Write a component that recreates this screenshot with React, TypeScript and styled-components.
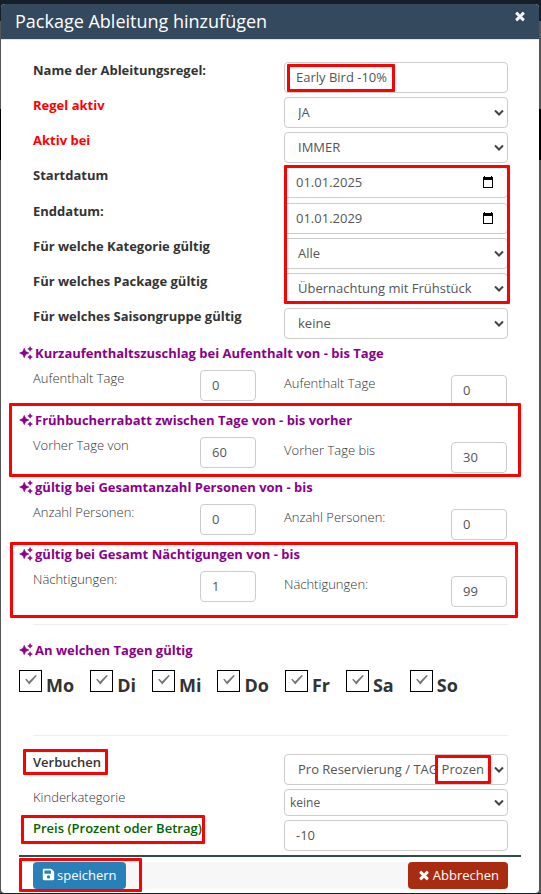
import React, { useId, useState } from "react";
import styled, { createGlobalStyle, css } from "styled-components";
import { FaSave } from "react-icons/fa";

const GlobalStyle = createGlobalStyle`
  *, *::before, *::after { box-sizing: border-box; }
  body {
    margin: 0;
    background: linear-gradient(#161e27 0 21px, #555 21px 109px, #000 109px 160px, #555 160px);
    font: 13px/18px "Open Sans", sans-serif;
    color: #333;
  }
  input, select, button { font-family: inherit; }
`;

const Modal = styled.main`
  margin: 4px 2px 0 1px;
  background: #fff;
  border-radius: 4px;
  overflow: hidden;
`;

const Header = styled.header`
  display: flex;
  align-items: flex-start;
  justify-content: space-between;
  padding: 0 12px 0 14px;
  background: #34495e;
  border-bottom: 1px solid #e5e5e5;
  color: #fff;
`;

const Title = styled.h1`
  margin: 0;
  font-size: 18px;
  font-weight: 400;
  line-height: 35px;
`;

const CloseButton = styled.button`
  display: flex;
  margin: 5px 0 0;
  padding: 0;
  border: 0;
  background: none;
  color: #f0f2f4;
  cursor: pointer;
`;

const Form = styled.form`
  padding: 22px 31px 4px 32px;
`;

const Row = styled.div<{ $height?: number }>`
  display: grid;
  grid-template-columns: minmax(0, 251fr) minmax(0, 224fr);
  align-items: start;
  min-height: ${(p) => p.$height ?? 35}px;
`;

const Label = styled.label<{ $tone?: string; $weight?: number }>`
  justify-self: start;
  position: relative;
  color: ${(p) => p.$tone ?? "#333"};
  font-weight: ${(p) => p.$weight ?? 700};
  line-height: 16px;
`;

const ControlWrap = styled.div`
  position: relative;
  display: flex;
`;

const control = css`
  width: 100%;
  min-width: 0;
  margin: 0;
  border: 1px solid #ccc;
  border-radius: 4px;
  background: #fff;
  color: #555;
  font-size: 13px;
  line-height: 18px;
`;

const Input = styled.input`
  ${control}
  height: 31px;
  padding: 0 11px 2px;
`;

const Select = styled.select<{ $compact?: boolean }>`
  ${control}
  appearance: none;
  height: ${(p) => (p.$compact ? 27 : 31)}px;
  padding: ${(p) => (p.$compact ? "0 23px 0 5px" : "0 23px 2px 13px")};
  font-size: ${(p) => (p.$compact ? 12 : 13)}px;
`;

const ChevronSvg = styled.svg`
  position: absolute;
  right: 4px;
  top: 50%;
  margin-top: -4px;
  pointer-events: none;
`;

const PickerButton = styled.button`
  position: absolute;
  right: 14px;
  top: 9px;
  display: flex;
  padding: 0;
  border: 0;
  background: none;
  color: #000;
`;

const Marker = styled.span<{ $inset: string }>`
  position: absolute;
  inset: ${(p) => p.$inset};
  border: 3px solid #f00;
  border-radius: 1px;
  pointer-events: none;
  z-index: 1;
`;

const Group = styled.div`
  position: relative;
`;

const RangeSection = styled.section`
  position: relative;
  min-height: 67px;
`;

const SectionTitle = styled.h2`
  display: flex;
  align-items: center;
  gap: 2px;
  margin: 0 0 0 -14px;
  color: #8b008b;
  font-size: 13px;
  font-weight: 700;
  line-height: 18px;
`;

const RangeRow = styled.div`
  display: grid;
  grid-template-columns: 1fr 1fr;
  column-gap: 28px;
  padding: 8px 1px 0 0;
`;

const RangeField = styled.div<{ $lower?: boolean }>`
  display: grid;
  grid-template-columns: 167fr 56fr;
  align-items: start;
  padding-top: ${(p) => (p.$lower ? 5 : 0)}px;
`;

const Divider = styled.hr<{ $space: string }>`
  margin: ${(p) => p.$space};
  border: 0;
  border-top: 1px solid #eee;
`;

const Days = styled.div`
  display: flex;
  flex-wrap: wrap;
  gap: 16px;
  margin: 11px 0 0 -14px;
`;

const Day = styled.label`
  position: relative;
  display: flex;
  gap: 4px;
  font-size: 18px;
  font-weight: 700;
  line-height: 30px;
`;

const DayBox = styled.input`
  appearance: none;
  width: 23px;
  height: 22px;
  margin: 0;
  border: 1px solid #000;
  background: #fff;
  &:checked + svg { visibility: visible; }
`;

const TickSvg = styled.svg`
  position: absolute;
  left: 5px;
  top: 3px;
  visibility: hidden;
  pointer-events: none;
`;

const Footer = styled.footer`
  margin: 0 18px;
  padding: 5px 13px 4px 14px;
  border-top: 2px solid #2f4f4f;
`;

const Actions = styled.div`
  position: relative;
  display: flex;
  justify-content: space-between;
  background: #f7f7f7;
`;

const ActionButton = styled.button<{ $color: string }>`
  display: flex;
  align-items: center;
  gap: 2px;
  height: 27px;
  padding: 0 9px 2px;
  border: 0;
  border-radius: 4px;
  background: ${(p) => p.$color};
  color: #fff;
  font-size: 13px;
  line-height: 18px;
  cursor: pointer;
`;

const CrossIcon = ({ size }: { size: number }) => (
  <svg width={size} height={size} viewBox="0 0 1792 1792" fill="currentColor" aria-hidden="true">
    <path d="M1490 1322q0 40-28 68l-136 136q-28 28-68 28t-68-28l-294-294-294 294q-28 28-68 28t-68-28l-136-136q-28-28-28-68t28-68l294-294-294-294q-28-28-28-68t28-68l136-136q28-28 68-28t68 28l294 294 294-294q28-28 68-28t68 28l136 136q28 28 28 68t-28 68l-294 294 294 294q28 28 28 68z" />
  </svg>
);

const SparkleIcon = () => (
  <svg width="14" height="14" viewBox="0 0 24 24" fill="currentColor" stroke="currentColor" strokeWidth="1" aria-hidden="true">
    <path d="M19 9l1.25-2.75L23 5l-2.75-1.25L19 1l-1.25 2.75L15 5l2.75 1.25L19 9zm-7.5.5L9 4 6.5 9.5 1 12l5.5 2.5L9 20l2.5-5.5L17 12l-5.5-2.5zM19 15l-1.25 2.75L15 19l2.75 1.25L19 23l1.25-2.75L23 19l-2.75-1.25L19 15z" />
  </svg>
);

const Tick = () => (
  <TickSvg width="14" height="14" viewBox="0 0 14 14" aria-hidden="true">
    <path d="M1.2 6.6 2.3 5.7 5 8.4 11.6 2 12.9 2.8 5.2 11.4z" fill="#777" />
  </TickSvg>
);

const Chevron = () => (
  <ChevronSvg width="10" height="8" viewBox="0 0 10 8" aria-hidden="true">
    <path d="M1 1.5 5 5.5 9 1.5" fill="none" stroke="#444" strokeWidth="2" />
  </ChevronSvg>
);

const CalendarIcon = () => (
  <svg width="12" height="12" viewBox="0 0 12 12" aria-hidden="true">
    <path d="M2 0h1v1h6V0h1v1h1v11H1V1h1zM2 4v7h8V4z" fill="currentColor" fillRule="evenodd" />
  </svg>
);

interface RowProps {
  label: string;
  tone?: string;
  weight?: number;
  height?: number;
  labelMarker?: string;
  controlMarker?: string;
}

interface FieldProps extends RowProps {
  value: string;
  compact?: boolean;
}

const FormRow = (p: RowProps & { id: string; children: React.ReactNode }) => (
  <Row $height={p.height}>
    <Label htmlFor={p.id} $tone={p.tone} $weight={p.weight}>
      {p.label}
      {p.labelMarker && <Marker $inset={p.labelMarker} />}
    </Label>
    <ControlWrap>
      {p.children}
      {p.controlMarker && <Marker $inset={p.controlMarker} />}
    </ControlWrap>
  </Row>
);

const TextField = ({ value, ...row }: FieldProps) => {
  const id = useId();
  return (
    <FormRow {...row} id={id}>
      <Input id={id} type="text" defaultValue={value} />
    </FormRow>
  );
};

const DateField = ({ value, ...row }: FieldProps) => {
  const id = useId();
  return (
    <FormRow {...row} id={id}>
      <Input id={id} type="text" inputMode="numeric" defaultValue={value} />
      <PickerButton type="button" aria-label={`${row.label} Kalender`}>
        <CalendarIcon />
      </PickerButton>
    </FormRow>
  );
};

const SelectField = ({ value, compact, ...row }: FieldProps) => {
  const id = useId();
  return (
    <FormRow {...row} id={id}>
      <Select id={id} defaultValue={value} $compact={compact}>
        <option>{value}</option>
      </Select>
      <Chevron />
    </FormRow>
  );
};

interface RangeProps {
  title: string;
  labels: [string, string];
  values: [string, string];
  marker?: string;
}

const Range = ({ title, labels, values, marker }: RangeProps) => {
  const id = useId();
  return (
    <RangeSection>
      <SectionTitle>
        <SparkleIcon />
        {title}
      </SectionTitle>
      <RangeRow>
        {labels.map((label, i) => (
          <RangeField key={i} $lower={i === 1}>
            <Label htmlFor={id + i} $weight={300}>{label}</Label>
            <Input id={id + i} type="text" defaultValue={values[i]} />
          </RangeField>
        ))}
      </RangeRow>
      {marker && <Marker $inset={marker} />}
    </RangeSection>
  );
};

const dayNames = ["Mo", "Di", "Mi", "Do", "Fr", "Sa", "So"];

export default function App() {
  const [days, setDays] = useState<string[]>(dayNames);
  const toggle = (day: string) =>
    setDays((d) => (d.includes(day) ? d.filter((x) => x !== day) : [...d, day]));

  return (
    <>
      <GlobalStyle />
      <Modal>
        <Header>
          <Title>Package Ableitung hinzufügen</Title>
          <CloseButton type="button" aria-label="Schließen">
            <CrossIcon size={14} />
          </CloseButton>
        </Header>
        <Form id="rule" onSubmit={(e) => e.preventDefault()}>
          <TextField label="Name der Ableitungsregel:" value="Early Bird -10%" controlMarker="2px 113px 1px 3px" />
          <SelectField label="Regel aktiv" tone="#f00" value="JA" />
          <SelectField label="Aktiv bei" tone="#f00" value="IMMER" />
          <Group>
            <DateField label="Startdatum" value="01.01.2025" height={36} />
            <DateField label="Enddatum:" value="01.01.2029" />
            <SelectField label="Für welche Kategorie gültig" value="Alle" />
            <SelectField label="Für welches Package gültig" value="Übernachtung mit Frühstück" />
            <Marker $inset="-2px -2px 4px 251px" />
          </Group>
          <SelectField label="Für welches Saisongruppe gültig" value="keine" height={36} />
          <Range
            title="Kurzaufenthaltszuschlag bei Aufenthalt von - bis Tage"
            labels={["Aufenthalt Tage", "Aufenthalt Tage"]}
            values={["0", "0"]}
          />
          <Range
            title="Frühbucherrabatt zwischen Tage von - bis vorher"
            labels={["Vorher Tage von", "Vorher Tage bis"]}
            values={["60", "30"]}
            marker="-8px -13px 1px -24px"
          />
          <Range
            title="gültig bei Gesamtanzahl Personen von - bis"
            labels={["Anzahl Personen:", "Anzahl Personen:"]}
            values={["0", "0"]}
          />
          <Range
            title="gültig bei Gesamt Nächtigungen von - bis"
            labels={["Nächtigungen:", "Nächtigungen:"]}
            values={["1", "99"]}
            marker="-3px -10px -6px -23px"
          />
          <Divider $space="12px 0 16px" />
          <SectionTitle>
            <SparkleIcon />
            An welchen Tagen gültig
          </SectionTitle>
          <Days>
            {dayNames.map((day) => (
              <Day key={day}>
                <DayBox type="checkbox" checked={days.includes(day)} onChange={() => toggle(day)} />
                <Tick />
                {day}
              </Day>
            ))}
          </Days>
          <Divider $space="35px 0 18px" />
          <SelectField
            label="Verbuchen"
            weight={600}
            value="Pro Reservierung / TAG Prozent"
            labelMarker="-5px -7px -5px -10px"
            controlMarker="1px 17px 1px 151px"
          />
          <SelectField label="Kinderkategorie" weight={300} value="keine" compact height={31} />
          <TextField
            label="Preis (Prozent oder Betrag)"
            tone="#006400"
            weight={600}
            value="-10"
            height={31}
            labelMarker="-5px -3px -8px -12px"
          />
        </Form>
        <Footer>
          <Actions>
            <ActionButton type="submit" form="rule" $color="#2980b9">
              <FaSave size={13} aria-hidden="true" />
              speichern
            </ActionButton>
            <ActionButton type="button" $color="#a92b10">
              <CrossIcon size={14} />
              Abbrechen
            </ActionButton>
            <Marker $inset="-4px 366px -3px -14px" />
          </Actions>
        </Footer>
      </Modal>
    </>
  );
}
